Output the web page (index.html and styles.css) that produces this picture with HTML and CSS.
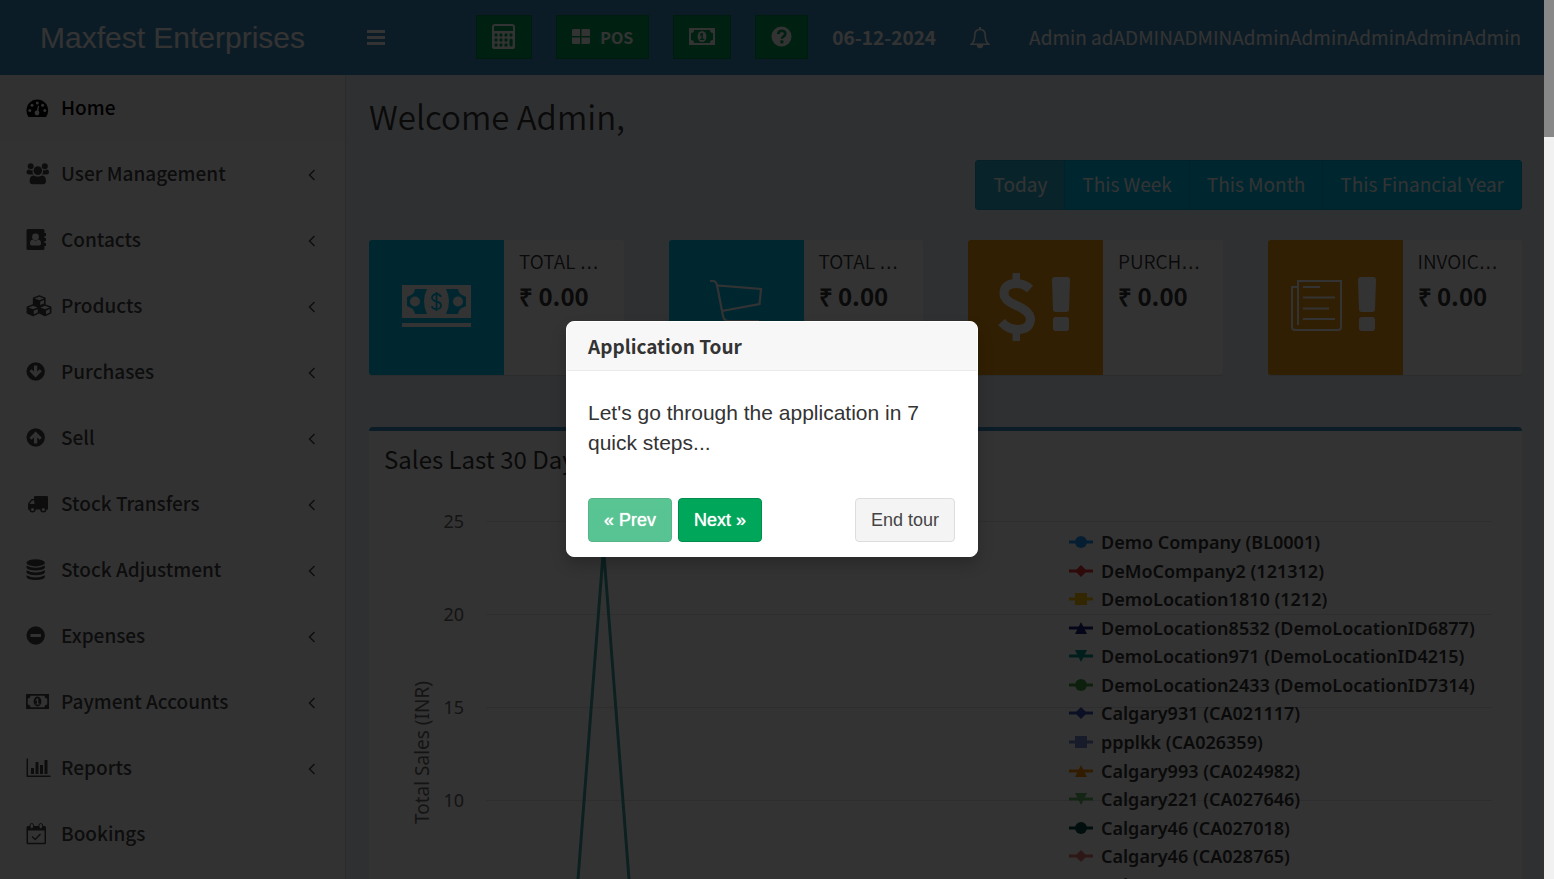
FILE: index.html
```html
<!DOCTYPE html>
<html lang="en">
<head>
<meta charset="utf-8">
<title>Home - Maxfest Enterprises</title>
<link rel="stylesheet" href="styles.css">
</head>
<body>
<svg class="defs" aria-hidden="true">
  <symbol id="i-money" viewBox="0 0 26 17">
    <path fill="currentColor" fill-rule="evenodd" d="M0 0h26v17H0zM5 2a3 3 0 0 1-3 3v7a3 3 0 0 1 3 3h16a3 3 0 0 1 3-3V5a3 3 0 0 1-3-3z"/>
    <ellipse cx="13" cy="8.500" rx="4.400" ry="5.600" fill="currentColor"/>
    <path class="cut" d="M12.300 5h1.600v5.700h1.400v1.300h-4.400v-1.300h1.500V7.200l-1.400.7V6.500z"/>
  </symbol>
  <symbol id="i-left" viewBox="0 0 8 12"><path d="M6.500 1 1.500 6l5 5" fill="none" stroke="currentColor" stroke-width="1.500"/></symbol>
  <symbol id="i-bang" viewBox="0 0 18 54"><path fill="#fff" d="M3 0h12q3 0 3 3l-1 29q0 3-3 3H4q-3 0-3-3L0 3q0-3 3-3zM4 40h10q3 0 3 3v8q0 3-3 3H4q-3 0-3-3v-8q0-3 3-3z"/></symbol>
</svg>

<div class="app">
  <header class="header">
    <a class="logo" href="#">Maxfest Enterprises</a>
    <nav class="navbar">
      <button class="toggle" aria-label="Toggle navigation"><svg width="20" height="16" viewBox="0 0 20 16"><path fill="currentColor" d="M1 0h18v3H1zM1 6h18v3H1zM1 12h18v3H1z"/></svg></button>
      <div class="tools">
        <button class="tool" aria-label="Calculator"><svg width="24" height="26" viewBox="0 0 24 26"><path fill="currentColor" fill-rule="evenodd" d="M3 0h17q3 0 3 3v20q0 2-3 2H3q-3 0-3-2V3q0-3 3-3zM3 2q-1 0-1 1v4h19V3q0-1-1-1z"/><g class="cut"><circle cx="4" cy="11" r="1.700"/><circle cx="9" cy="11" r="1.700"/><circle cx="14" cy="11" r="1.700"/><circle cx="19" cy="11" r="1.700"/><circle cx="4" cy="16" r="1.700"/><circle cx="9" cy="16" r="1.700"/><circle cx="14" cy="16" r="1.700"/><circle cx="4" cy="21" r="1.700"/><circle cx="9" cy="21" r="1.700"/><circle cx="14" cy="21" r="1.700"/><rect x="17.500" y="14.500" width="3.200" height="8" rx="1.500"/></g></svg></button>
        <button class="tool"><svg width="18" height="15" viewBox="0 0 18 15"><path fill="currentColor" d="M1 0h7v7H0V1zM9.500 0h7.500l1 1v6H9.500zM0 8.500h8V15H1l-1-1zM9.500 8.500H18V14l-1 1H9.500z"/></svg>POS</button>
        <button class="tool" aria-label="Today's profit"><svg width="26" height="17"><use href="#i-money"/></svg></button>
        <button class="tool" aria-label="Help"><svg width="21" height="21" viewBox="0 0 22 22"><circle cx="11" cy="11" r="10.500" fill="currentColor"/><path d="M7.500 8.500q.5-3.500 4-3.500 3.500.3 3.500 3.200 0 1.600-2 2.800-1.500 1-1.500 2.300" fill="none" class="cut-line" stroke-width="2.800"/><rect class="cut" x="9.800" y="15" width="3.200" height="3.200"/></svg></button>
      </div>
      <span class="date">06-12-2024</span>
      <button class="bell" aria-label="Notifications"><svg width="20" height="22" viewBox="0 0 20 22"><path d="M10 2.500C6.300 2.500 4.800 5 4.800 8c0 5-1 7.200-3.300 9.200h17C16.200 15.200 15.200 13 15.200 8c0-3-1.500-5.500-5.200-5.500z" fill="none" stroke="currentColor" stroke-width="1.600"/><path d="M9 0h2v3H9zM6.800 18h6.400a3.200 3.200 0 0 1-6.400 0z" fill="currentColor"/></svg></button>
      <a class="user" href="#">Admin adADMINADMINAdminAdminAdminAdminAdmin</a>
    </nav>
  </header>

  <div class="body">
    <aside class="sidebar">
      <ul class="menu">
        <li><a class="item active" href="#"><svg class="ico" viewBox="0 0 26 22"><path fill="currentColor" d="M11.300 2.500C5 2.500.5 7.500.5 13.300c0 2.300.6 4.200 1.700 6.200q.3.500.9.500h16.400q.6 0 .9-.5c1.100-2 1.700-3.900 1.700-6.200C22.100 7.500 17.500 2.500 11.300 2.500z"/><g class="cut"><circle cx="3.800" cy="13.500" r="1.500"/><circle cx="6" cy="8.300" r="1.500"/><circle cx="11.300" cy="6" r="1.500"/><circle cx="16.600" cy="8.300" r="1.500"/><circle cx="18.800" cy="13.500" r="1.500"/><circle cx="11" cy="16" r="2.400"/><path d="m10.300 15.500 1.700-6.700 1.200.3-1.300 7z"/></g></svg>Home</a></li>
        <li><a class="item" href="#"><svg class="ico" viewBox="0 0 26 22"><g fill="currentColor"><circle cx="4.700" cy="3.200" r="3"/><circle cx="18.800" cy="3.200" r="3"/><circle cx="11.800" cy="7.600" r="4.300"/><path d="M2.500 6.500q2 1.200 4 .4-.3 2.800 1 4.600H3Q.5 11.500.5 9.700.5 6.700 2.500 6.500zM21 6.500q-2 1.200-4 .4.300 2.800-1 4.600h4.500q2.500 0 2.500-1.800 0-3-2-3.200zM7.500 12.500q4.300 2.300 8.600 0 3.900.3 3.900 5.500 0 3.200-3.200 3.200h-10q-3.200 0-3.200-3.200 0-5.200 3.900-5.500z"/></g></svg>User Management<svg class="chev"><use href="#i-left"/></svg></a></li>
        <li><a class="item" href="#"><svg class="ico" viewBox="0 0 26 22"><path fill="currentColor" d="M2 0h15q1.500 0 1.500 1.500V4H20v3h-1.500v2H20v3h-1.500v2H20v3h-1.500v2.500q0 1.500-1.500 1.500H2q-1.500 0-1.500-1.500v-18Q.5 0 2 0z"/><g class="cut"><circle cx="9.500" cy="7.800" r="3.400"/><path d="M6.600 10.500q2.900 2.300 5.800 0 2.600.5 2.600 4 0 2-1.800 2H5.800q-1.800 0-1.800-2 0-3.500 2.600-4z"/></g></svg>Contacts<svg class="chev"><use href="#i-left"/></svg></a></li>
        <li><a class="item" href="#"><svg class="ico" viewBox="0 0 26 22"><g fill="currentColor" stroke="currentColor" stroke-width="1.300" stroke-linejoin="round"><path d="M7.500 3 13.300.8 19 3v6l-5.700 2.500L7.500 9zM1.200 12l5.700-2.200 5.800 2.200v6L7 20.700 1.200 18zM13.300 12 19 9.800l5.800 2.200v6L19 20.700 13.300 18z"/></g><g class="cut"><path d="M8.800 3.500 13.300 1.800l4.500 1.700-4.500 1.800zM14.200 6.700 18 5v3.500l-3.800 1.600zM2.500 12.500 7 10.800l4.500 1.700L7 14.300zM7.800 15.700l3.900-1.700v3.500l-3.900 1.700zM14.500 12.500l4.500-1.700 4.500 1.700-4.500 1.800zM20 15.700l3.800-1.700v3.500L20 19.200z"/></g></svg>Products<svg class="chev"><use href="#i-left"/></svg></a></li>
        <li><a class="item" href="#"><svg class="ico" viewBox="0 0 26 22"><circle cx="9.700" cy="10.500" r="9.200" fill="currentColor"/><path class="cut" d="M8 4.500h3.200v6l2.500-2.300 2.100 2.100-6.200 6.200-6.100-6.200 2-2.100L8 10.500z"/></svg>Purchases<svg class="chev"><use href="#i-left"/></svg></a></li>
        <li><a class="item" href="#"><svg class="ico" viewBox="0 0 26 22"><circle cx="9.700" cy="10.500" r="9.200" fill="currentColor"/><path class="cut" d="M8 16.500h3.200v-6l2.500 2.300 2.100-2.100-6.200-6.200-6.100 6.200 2 2.100L8 10.500z"/></svg>Sell<svg class="chev"><use href="#i-left"/></svg></a></li>
        <li><a class="item" href="#"><svg class="ico" viewBox="0 0 26 22"><path fill="currentColor" d="M9 3h12q1 0 1 1v12.500H1.500V16H2v-5.500L5.500 6H8V4q0-1 1-1z"/><path class="cut" d="M3.500 11 6 7.500h2.300V11z"/><g fill="currentColor"><circle cx="6.500" cy="16.200" r="3.200"/><circle cx="17.300" cy="16.200" r="3.200"/></g><g class="cut"><circle cx="6.500" cy="16.500" r="1.500"/><circle cx="17.300" cy="16.500" r="1.500"/></g></svg>Stock Transfers<svg class="chev"><use href="#i-left"/></svg></a></li>
        <li><a class="item" href="#"><svg class="ico" viewBox="0 0 26 22"><g fill="currentColor"><ellipse cx="9.700" cy="3.800" rx="9.200" ry="3.600"/><path d="M.5 6.500q9.200 4.500 18.400 0v2.200q-1.500 2.700-9.200 2.700T.5 8.700zM.5 11.300q9.200 4.500 18.400 0v2.200q-1.500 2.700-9.200 2.700T.5 13.500zM.5 16.200q9.200 4.500 18.400 0v2.100q-1.500 2.700-9.200 2.700T.5 18.300z"/></g></svg>Stock Adjustment<svg class="chev"><use href="#i-left"/></svg></a></li>
        <li><a class="item" href="#"><svg class="ico" viewBox="0 0 26 22"><circle cx="9.700" cy="10.500" r="9.200" fill="currentColor"/><path class="cut" d="M4.500 9h10.400v3H4.500z"/></svg>Expenses<svg class="chev"><use href="#i-left"/></svg></a></li>
        <li><a class="item" href="#"><svg class="ico" viewBox="0 0 26 22"><use href="#i-money" x="0" y="3" width="23" height="15"/></svg>Payment Accounts<svg class="chev"><use href="#i-left"/></svg></a></li>
        <li><a class="item" href="#"><svg class="ico" viewBox="0 0 26 22"><path fill="currentColor" d="M.5 1.500H2v17h22.500V20H.5zM5 11h3v6H5zM9.500 5h3v12h-3zM14 8h3v9h-3zM18.500 3h3v14h-3z"/></svg>Reports<svg class="chev"><use href="#i-left"/></svg></a></li>
        <li><a class="item" href="#"><svg class="ico" viewBox="0 0 26 22"><path fill="currentColor" fill-rule="evenodd" d="M2 3h16.500Q20 3 20 4.500V20q0 1.300-1.500 1.300H2Q.5 21.300.5 20V4.500Q.5 3 2 3zM2 7.500v12.300h16.500V7.500z"/><rect x="4" y=".5" width="3.500" height="5.200" rx="1.700" class="cut ring"/><rect x="13" y=".5" width="3.500" height="5.200" rx="1.700" class="cut ring"/><path d="m6 13.500 3.200 3 5.300-5.500" fill="none" stroke="currentColor" stroke-width="1.500"/></svg>Bookings</a></li>
      </ul>
    </aside>

    <main class="content">
      <h1 class="welcome">Welcome Admin,</h1>
      <div class="filters">
        <button class="filter on">Today</button><button class="filter">This Week</button><button class="filter">This Month</button><button class="filter">This Financial Year</button>
      </div>

      <section class="cards">
        <article class="card">
          <svg class="pic aqua" viewBox="0 0 135 135"><path fill="#fff" d="M33 45h69v33H33zM33 83h69v4H33z"/><g fill="#00c0ef"><path d="M46 49h12q-6 12 0 25H46q-1-5-4-6l-4-2v-9l4-2q3-1 4-6zM89 49H77q6 12 0 25h12q1-5 4-6l4-2v-9l-4-2q-3-1-4-6z"/></g><circle cx="46" cy="61.500" r="5" fill="#fff"/><circle cx="89" cy="61.500" r="5" fill="#fff"/><path d="M72 57q-1-3-4.500-3T63 57.500q0 3 4.500 4t4.500 4q0 3.500-4.500 3.500T63 66M67.500 52v19" fill="none" stroke="#00c0ef" stroke-width="1.800"/></svg>
          <div class="info"><span class="label">TOTAL <span class="dots">…</span></span><span class="value">₹ 0.00</span></div>
        </article>
        <article class="card">
          <svg class="pic aqua" viewBox="0 0 135 135"><path d="M41 41h3q3 0 4 4l6 31q1 5 5 5h31M49 45.500 92 49 90.500 64 53 71" fill="none" stroke="#fff" stroke-width="2.200"/><circle cx="60" cy="88" r="3" fill="none" stroke="#fff" stroke-width="2"/><circle cx="84" cy="88" r="3" fill="none" stroke="#fff" stroke-width="2"/></svg>
          <div class="info"><span class="label">TOTAL <span class="dots">…</span></span><span class="value">₹ 0.00</span></div>
        </article>
        <article class="card">
          <svg class="pic amber" viewBox="0 0 135 135"><path d="M62 49q-6-5.500-13.500-5.500-12.500 0-12.500 10 0 7 12.500 12t14 13q0 11-13 11-9.500 0-16-7.500" fill="none" stroke="#fff" stroke-width="9"/><rect x="44.500" y="33" width="7.500" height="10" rx="1" fill="#fff"/><rect x="44.500" y="91" width="7.500" height="10" rx="1" fill="#fff"/><use href="#i-bang" x="84" y="37" width="18" height="54"/></svg>
          <div class="info"><span class="label">PURCH<span class="dots">…</span></span><span class="value">₹ 0.00</span></div>
        </article>
        <article class="card">
          <svg class="pic amber" viewBox="0 0 135 135"><path d="M30 85V41h43v46q0 3-3 3H27q-3 0-3-3V47h5M35 47h17M35 57.500h32M35 68.500h26M35 79h32" fill="none" stroke="#fff" stroke-width="2"/><use href="#i-bang" x="90" y="37" width="18" height="54"/></svg>
          <div class="info"><span class="label">INVOIC<span class="dots">…</span></span><span class="value">₹ 0.00</span></div>
        </article>
      </section>

      <section class="panel">
        <h2 class="panel-title">Sales Last 30 Days</h2>
        <div class="chart">
          <span class="axis">Total Sales (INR)</span>
          <div class="plot">
            <div class="tick"><span>25</span></div>
            <div class="tick"><span>20</span></div>
            <div class="tick"><span>15</span></div>
            <div class="tick"><span>10</span></div>
            <svg class="series" width="200" height="420" viewBox="0 0 200 420"><path d="M88.800 400 117.500 27 146.200 400" fill="none" stroke="#3fa0a0" stroke-width="3" stroke-linejoin="round"/></svg>
          </div>
          <ul class="legend">
            <li class="c1"><svg viewBox="0 0 24 14"><path d="M0 7h24"/><circle cx="12" cy="7" r="6"/></svg>Demo Company (BL0001)</li>
            <li class="c2"><svg viewBox="0 0 24 14"><path d="M0 7h24"/><path class="m" d="m12 1 6 6-6 6-6-6z"/></svg>DeMoCompany2 (121312)</li>
            <li class="c3"><svg viewBox="0 0 24 14"><path d="M0 7h24"/><path class="m" d="M6 1h12v12H6z"/></svg>DemoLocation1810 (1212)</li>
            <li class="c4"><svg viewBox="0 0 24 14"><path d="M0 7h24"/><path class="m" d="m12 1 6 12H6z"/></svg>DemoLocation8532 (DemoLocationID6877)</li>
            <li class="c5"><svg viewBox="0 0 24 14"><path d="M0 7h24"/><path class="m" d="M6 1h12l-6 12z"/></svg>DemoLocation971 (DemoLocationID4215)</li>
            <li class="c6"><svg viewBox="0 0 24 14"><path d="M0 7h24"/><circle cx="12" cy="7" r="6"/></svg>DemoLocation2433 (DemoLocationID7314)</li>
            <li class="c7"><svg viewBox="0 0 24 14"><path d="M0 7h24"/><path class="m" d="m12 1 6 6-6 6-6-6z"/></svg>Calgary931 (CA021117)</li>
            <li class="c8"><svg viewBox="0 0 24 14"><path d="M0 7h24"/><path class="m" d="M6 1h12v12H6z"/></svg>ppplkk (CA026359)</li>
            <li class="c9"><svg viewBox="0 0 24 14"><path d="M0 7h24"/><path class="m" d="m12 1 6 12H6z"/></svg>Calgary993 (CA024982)</li>
            <li class="c10"><svg viewBox="0 0 24 14"><path d="M0 7h24"/><path class="m" d="M6 1h12l-6 12z"/></svg>Calgary221 (CA027646)</li>
            <li class="c11"><svg viewBox="0 0 24 14"><path d="M0 7h24"/><circle cx="12" cy="7" r="6"/></svg>Calgary46 (CA027018)</li>
            <li class="c12"><svg viewBox="0 0 24 14"><path d="M0 7h24"/><path class="m" d="m12 1 6 6-6 6-6-6z"/></svg>Calgary46 (CA028765)</li>
            <li class="c13"><svg viewBox="0 0 24 14"><path d="M0 7h24"/><path class="m" d="M6 1h12v12H6z"/></svg>Calgary703 (CA027716)</li>
          </ul>
        </div>
      </section>
    </main>
  </div>

  <div class="backdrop">
    <div class="tour" role="dialog" aria-labelledby="tour-title">
      <h3 class="tour-title" id="tour-title">Application Tour</h3>
      <div class="tour-body">
        <p class="tour-text">Let's go through the application in 7 quick steps...</p>
        <div class="tour-nav">
          <button class="btn green" disabled>« Prev</button>
          <button class="btn green">Next »</button>
          <button class="btn end">End tour</button>
        </div>
      </div>
    </div>
  </div>
</div>
<div class="scrollbar"><div class="thumb"></div></div>
</body>
</html>
```
FILE: styles.css
```css
* { box-sizing: border-box; }
body {
  margin: 0;
  height: 100vh;
  display: flex;
  overflow: hidden;
  background: #ecf0f5;
  color: #333;
  font-family: "Noto Sans CJK SC", "Open Sans", sans-serif;
  font-size: 19px;
  line-height: 30px;
}
button { font: inherit; color: inherit; border: 0; background: none; padding: 0; margin: 0; }
a { color: inherit; text-decoration: none; }
ul { list-style: none; margin: 0; padding: 0; }
h1, h2, h3, p { margin: 0; font-weight: 400; }
svg { display: block; flex: none; }
.defs { position: absolute; width: 0; height: 0; }
.app { position: relative; flex: 1; min-width: 0; display: flex; flex-direction: column; overflow: hidden; }
.scrollbar { width: 10px; flex: none; background: #f1f1f1; }
.thumb { height: 137px; background: #888; }

.header { --cut: #3c8dbc; display: flex; flex: none; height: 75px; background: #3c8dbc; color: #fff; }
.cut { fill: var(--cut); stroke: none; }
.cut-line { stroke: var(--cut); }
.logo { width: 345px; flex: none; text-align: center; font: 30px/75px "Liberation Sans", Arial, sans-serif; }
.navbar { flex: 1; display: flex; align-items: center; padding: 0 23px 2px 21px; white-space: nowrap; }
.toggle { margin-top: 2px; }
.tools { display: flex; gap: 24px; margin-left: auto; }
.tool { --cut: #00a65a; display: flex; align-items: center; justify-content: center; gap: 10px; height: 44px; padding: 0 15px; background: #00a65a; border: 1px solid #008d4c; font-size: 16px; font-weight: 700; }
.date { margin-left: 24px; font-weight: 700; }
.bell { margin: 2px 39px 0 34px; }

.body { flex: 1; min-height: 0; display: flex; }
.sidebar { width: 346px; flex: none; background: #f9fafc; border-right: 1px solid #d2d6de; overflow: hidden; }
.item { --cut: #f9fafc; display: flex; align-items: center; gap: 9px; height: 66px; padding: 0 29px 2px 26px; color: #444; font-weight: 500; }
.item.active { --cut: #f4f4f5; background: #f4f4f5; color: #000; }
.ico { width: 26px; height: 22px; margin-top: 2px; overflow: visible; }
.chev { width: 8px; height: 12px; margin: 4px 0 0 auto; }
.ring { stroke: currentColor; stroke-width: 1; }

.content { flex: 1; min-width: 0; padding: 20px 22px 0 23px; overflow: hidden; }
.welcome { font-size: 33px; line-height: 42px; font-weight: 350; }
.filters { display: flex; width: max-content; margin: 23px 0 30px auto; border-radius: 4px; overflow: hidden; }
.filter { height: 50px; padding: 0 17px 2px; background: #00c0ef; border: 1px solid #00acd6; margin-left: -1px; color: #fff; }
.filter.on { background: #31b0d5; border-color: #269abc; margin-left: 0; }

.cards { display: grid; grid-template-columns: repeat(4, 1fr); gap: 45px; }
.card { display: flex; height: 135px; background: #fff; border-radius: 3px; box-shadow: 0 1px 1px rgba(0, 0, 0, .1); overflow: hidden; }
.pic { width: 135px; height: 135px; }
.aqua { background: #00c0ef; }
.amber { background: #f39c12; }
.info { flex: 1; min-width: 0; padding: 6px 15px; white-space: nowrap; }
.label, .value { display: block; }
.label { height: 30px; font-weight: 350; }
.dots { font-family: "DejaVu Sans", sans-serif; font-weight: 400; }
.value { margin-top: 5px; font-size: 24px; font-weight: 700; }

.panel { margin-top: 52px; height: 700px; background: #fff; border-top: 4px solid #3c8dbc; border-radius: 4px 4px 0 0; }
.panel-title { padding: 13px 15px 0; font-size: 24px; }
.chart { position: relative; display: flex; margin-top: 47px; font-family: "Noto Sans", "Open Sans", sans-serif; font-size: 18px; padding: 0 30px 0 38px; color: #666; }
.axis { writing-mode: vertical-rl; transform: rotate(180deg); height: 464px; text-align: center; font-size: 19px; }
.plot { position: relative; flex: 1; }
.tick { display: flex; height: 93px; border-top: 1px solid #e6e6e6; margin-left: 49px; }
.tick span { width: 40px; margin: -15px 0 0 -62px; text-align: right; line-height: 28px; }
.series { position: absolute; left: 49px; top: 0; }
.legend { position: absolute; right: 43px; top: 7px; width: 410px; height: 371px; display: grid; grid-auto-rows: 1fr; align-items: center; color: #333; font-weight: 600; white-space: nowrap; }
.legend li { display: flex; align-items: center; gap: 8px; line-height: 28px; }
.legend svg { width: 24px; height: 14px; fill: currentColor; stroke: currentColor; stroke-width: 3; }
.legend circle, .legend .m { stroke: none; }
.c1 svg { color: #2196f3; }
.c2 svg { color: #e53935; }
.c3 svg { color: #ffc107; }
.c4 svg { color: #1a237e; }
.c5 svg { color: #009688; }
.c6 svg { color: #43a047; }
.c7 svg { color: #3f51b5; }
.c8 svg { color: #7986cb; }
.c9 svg { color: #fb8c00; }
.c10 svg { color: #66bb6a; }
.c11 svg { color: #004d40; }
.c12 svg { color: #e57373; }
.c13 svg { color: #8d6e63; }

.backdrop { position: absolute; inset: 0; display: flex; align-items: center; justify-content: center; padding-bottom: 1px; background: rgba(0, 0, 0, .8); }
.tour { width: 412px; background: #fff; border-radius: 8px; box-shadow: 0 8px 15px rgba(0, 0, 0, .2); font-family: "Liberation Sans", Arial, sans-serif; overflow: hidden; border: 1px solid #fff; }
.tour-title { padding: 9px 21px; line-height: 30px; background: #f7f7f7; border-bottom: 1px solid #ebebeb; font-family: "Noto Sans CJK SC", "Open Sans", sans-serif; font-size: 19px; font-weight: 700; }
.tour-body { padding: 27px 22px 14px 21px; }
.tour-text { font-size: 21px; }
.tour-nav { display: flex; gap: 6px; margin-top: 40px; }
.btn { height: 44px; padding: 0 15px; border: 1px solid; border-radius: 4px; font-size: 18px; }
.green { background: #00a65a; border-color: #008d4c; color: #fff; text-shadow: 0 0 1px #fff; }
.green:disabled { opacity: .65; }
.end { margin-left: auto; background: #f4f4f4; border-color: #ddd; color: #444; }
```
